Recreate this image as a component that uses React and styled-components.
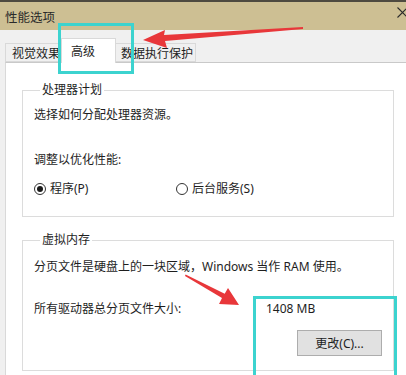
import styled, { createGlobalStyle } from "styled-components";

const GlobalStyle = createGlobalStyle`
  html, body {
    margin: 0;
    padding: 0;
    overflow: hidden;
  }
  * {
    box-sizing: border-box;
  }
`;

const Window = styled.div`
  position: relative;
  width: 406px;
  height: 375px;
  overflow: hidden;
  display: flex;
  flex-direction: column;
  font-family: "Noto Sans", "Noto Sans CJK SC", sans-serif;
  font-size: 12px;
  color: #1e1e1e;
  background: #f0f0f0;
`;

const TitleBar = styled.div`
  height: 30px;
  flex-shrink: 0;
  border-top: 2px solid #4e4a40;
  background: #cdbf93;
  padding-left: 5px;
  display: flex;
  align-items: center;
  justify-content: space-between;
  font-size: 12.5px;
  color: #2a2a2a;
`;

const CloseIcon = styled.svg`
  align-self: flex-start;
  margin-top: 5px;
  margin-right: -2px;
`;

const Body = styled.div`
  flex: 1;
  display: flex;
  flex-direction: column;
  padding-left: 5px;
`;

const TabStrip = styled.div`
  height: 32px;
  flex-shrink: 0;
  display: flex;
  align-items: flex-end;
  position: relative;
  z-index: 1;
`;

const Tab = styled.div`
  height: ${(p) => (p.$active ? "25px" : "19px")};
  margin: ${(p) => (p.$active ? "0 -2px -1px" : "0")};
  padding: ${(p) => (p.$active ? "0 0 0 9px" : "0 2px 0 6px")};
  width: ${(p) => (p.$active ? "55px" : "auto")};
  position: relative;
  z-index: ${(p) => (p.$active ? 2 : 1)};
  display: flex;
  align-items: ${(p) => (p.$active ? "flex-start" : "center")};
  padding-top: ${(p) => (p.$active ? "3px" : "0")};
  background: ${(p) => (p.$active ? "#ffffff" : "#f0f0f0")};
  border: 1px solid #d9d9d9;
  border-bottom: ${(p) => (p.$active ? "none" : "1px solid #d9d9d9")};
  white-space: nowrap;
  font-size: 12px;
`;

const Panel = styled.div`
  flex: 1;
  background: #ffffff;
  border-top: 1px solid #c9c9c9;
  border-left: 1px solid #d9d9d9;
  padding: 19px 12px 0 16px;
`;

const Group = styled.fieldset`
  margin: ${(p) => (p.$spaced ? "15px 0 0" : "0")};
  padding: 0 11px ${(p) => p.$bottom}px;
  border: 1px solid #dcdcdc;
  min-width: 0;
`;

const Legend = styled.legend`
  margin-left: 6px;
  padding: 0 2px;
  font-size: 12px;
  line-height: 16px;
`;

const Line = styled.div`
  margin-top: ${(p) => p.$gap}px;
  line-height: 16px;
  white-space: nowrap;
`;

const RadioRow = styled.div`
  margin-top: 13px;
  display: grid;
  grid-template-columns: 142px auto;
  line-height: 16px;
`;

const RadioOption = styled.label`
  display: flex;
  align-items: center;
  gap: 4px;
  white-space: nowrap;
`;

const RadioDot = styled.span`
  width: 12px;
  height: 12px;
  border-radius: 50%;
  border: 1px solid #333333;
  background: #ffffff;
  display: flex;
  align-items: center;
  justify-content: center;

  &::after {
    content: "";
    width: 6px;
    height: 6px;
    border-radius: 50%;
    background: ${(p) => (p.$checked ? "#1a1a1a" : "transparent")};
  }
`;

const SizeRow = styled.div`
  margin-top: 26px;
  display: grid;
  grid-template-columns: 232px auto;
  line-height: 16px;
  white-space: nowrap;
`;

const ButtonRow = styled.div`
  margin-top: 13px;
  display: flex;
  justify-content: flex-end;
`;

const Button = styled.button`
  width: 85px;
  height: 26px;
  border: 1px solid #adadad;
  background: #e1e1e1;
  font-family: "Noto Sans", "Noto Sans CJK SC", sans-serif;
  font-size: 12px;
  color: #1e1e1e;
  padding: 0;
`;

const Highlight = styled.div`
  position: absolute;
  left: ${(p) => p.$x}px;
  top: ${(p) => p.$y}px;
  width: ${(p) => p.$w}px;
  height: ${(p) => p.$h}px;
  border: 3px solid #3cd3cf;
  pointer-events: none;
  z-index: 5;
`;

const ArrowLayer = styled.svg`
  position: absolute;
  left: 0;
  top: 0;
  pointer-events: none;
  z-index: 6;
`;

function Radio({ checked, children }) {
  return (
    <RadioOption>
      <RadioDot $checked={checked} />
      {children}
    </RadioOption>
  );
}

export default function App() {
  return (
    <>
      <GlobalStyle />
      <Window>
        <TitleBar>
          <span>性能选项</span>
          <CloseIcon width="11" height="11" viewBox="0 0 11 11">
            <path d="M0.5 0.5 L10.5 10.5 M10.5 0.5 L0.5 10.5" stroke="#2b2b2b" strokeWidth="1.1" />
          </CloseIcon>
        </TitleBar>
        <Body>
          <TabStrip>
            <Tab>视觉效果</Tab>
            <Tab $active>高级</Tab>
            <Tab>数据执行保护</Tab>
          </TabStrip>
          <Panel>
            <Group $bottom={19}>
              <Legend>处理器计划</Legend>
              <Line $gap={9}>选择如何分配处理器资源。</Line>
              <Line $gap={29}>调整以优化性能:</Line>
              <RadioRow>
                <Radio checked>程序(P)</Radio>
                <Radio>后台服务(S)</Radio>
              </RadioRow>
            </Group>
            <Group $spaced $bottom={14}>
              <Legend>虚拟内存</Legend>
              <Line $gap={11}>分页文件是硬盘上的一块区域，Windows 当作 RAM 使用。</Line>
              <SizeRow>
                <span>所有驱动器总分页文件大小:</span>
                <span>1408 MB</span>
              </SizeRow>
              <ButtonRow>
                <Button>更改(C)...</Button>
              </ButtonRow>
            </Group>
          </Panel>
        </Body>

        <Highlight $x={58} $y={23} $w={76} $h={51} />
        <Highlight $x={253} $y={296} $w={144} $h={84} />

        <ArrowLayer width="406" height="375" viewBox="0 0 406 375">
          <polygon
            fill="#e8373a"
            points="143,40 165,30 164,35 303,27 303,29 165,41 167,48"
          />
          <polygon
            fill="#e8373a"
            points="239,305 219,304 222,298 185,276 185.6,274.4 224.7,293.7 228,288"
          />
        </ArrowLayer>
      </Window>
    </>
  );
}
